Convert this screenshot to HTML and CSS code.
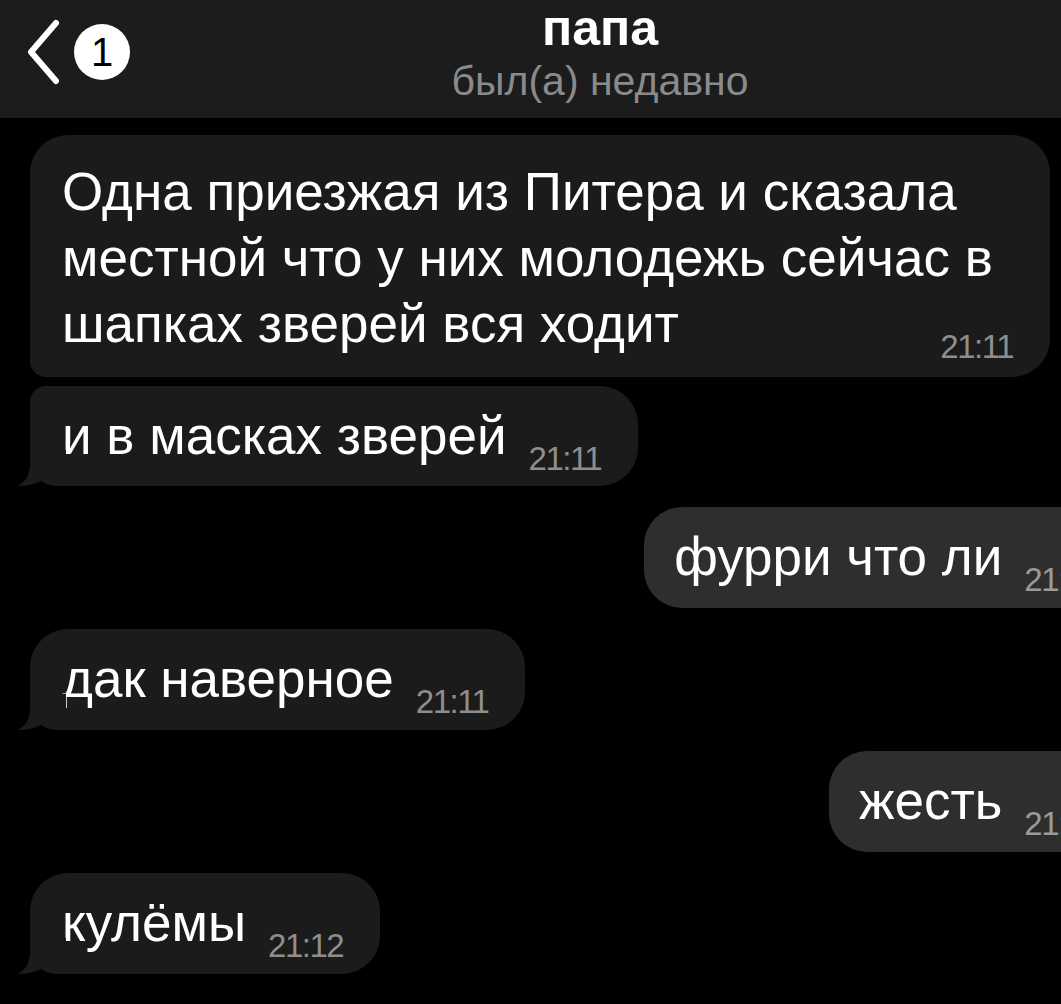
FILE: index.html
```html
<!DOCTYPE html>
<html lang="ru">

<head>
    <meta charset="UTF-8">
    <meta name="viewport" content="width=device-width, initial-scale=1.0">
    <title>папа</title>
    <link rel="stylesheet" href="styles.css">
</head>

<body>
    <div class="app">
        <div class="header">
            <div class="back">
                <svg class="chevron" width="36" height="66" viewBox="0 0 36 66">
                    <path d="M31 4 L6 33 L31 62" fill="none" stroke="#fff" stroke-width="6" stroke-linecap="round" stroke-linejoin="round"/>
                </svg>
                <span class="badge">1</span>
            </div>
            <div class="title">
                <div class="name">папа</div>
                <div class="status">был(а) недавно</div>
            </div>
            <div></div>
        </div>

        <div class="chat">
            <div class="row in">
                <div class="bubble group-top">Одна приезжая из Питера и сказала местной что у них молодежь сейчас в шапках зверей вся ходит<span class="time">21:11</span></div>
            </div>
            <div class="row in tight">
                <div class="bubble tail group-bottom">и в масках зверей<span class="time">21:11</span>
                    <svg class="tail-svg" width="48" height="36" viewBox="0 0 48 36"><path d="M12 0 V14 C12 25 7 32 0 36 C9 36 17 34 23 31 C27 34 33 36 44 36 L48 36 V0 Z" fill="#1b1b1b"/></svg>
                </div>
            </div>
            <div class="row out">
                <div class="bubble">фурри что ли<span class="time">21:11</span></div>
            </div>
            <div class="row in">
                <div class="bubble tail">дак наверное<span class="time">21:11</span>
                    <svg class="tail-svg" width="48" height="36" viewBox="0 0 48 36"><path d="M12 0 V14 C12 25 7 32 0 36 C9 36 17 34 23 31 C27 34 33 36 44 36 L48 36 V0 Z" fill="#1b1b1b"/></svg>
                </div>
            </div>
            <div class="row out">
                <div class="bubble">жесть<span class="time">21:11</span></div>
            </div>
            <div class="row in">
                <div class="bubble tail">кулёмы<span class="time">21:12</span>
                    <svg class="tail-svg" width="48" height="36" viewBox="0 0 48 36"><path d="M12 0 V14 C12 25 7 32 0 36 C9 36 17 34 23 31 C27 34 33 36 44 36 L48 36 V0 Z" fill="#1b1b1b"/></svg>
                </div>
            </div>
        </div>
    </div>
</body>

</html>
```

FILE: styles.css
```css
body {
    margin: 0;
    background-color: #000;
    overflow: hidden;
    font-family: 'Liberation Sans', Arial, sans-serif;
    color: #fff;
}
.app {
    width: 1200px;
}
.header {
    height: 118px;
    box-sizing: border-box;
    padding-top: 3px;
    background-color: #1c1c1c;
    display: grid;
    grid-template-columns: 1fr auto 1fr;
}
.back {
    display: flex;
    align-items: center;
    gap: 13px;
    padding-left: 25px;
    height: 98px;
}
.badge {
    width: 56px;
    height: 56px;
    border-radius: 50%;
    background-color: #fff;
    color: #000;
    font-size: 40px;
    line-height: 56px;
    text-align: center;
}
.title {
    text-align: center;
}
.name {
    font-size: 50px;
    font-weight: bold;
    line-height: 50px;
}
.status {
    font-size: 41px;
    line-height: 44px;
    margin-top: 6px;
    color: #8a8a8a;
}
.chat {
    display: flex;
    flex-direction: column;
    gap: 21px;
    padding-top: 17px;
}
.row {
    display: flex;
}
.row.in {
    justify-content: flex-start;
    padding-left: 30px;
}
.row.out {
    justify-content: flex-end;
    padding-right: 66px;
}
.row.tight {
    margin-top: -12px; /* grouped messages sit closer */
}
.bubble {
    position: relative;
    max-width: 951px;
    padding: 17px 37px 18px 32px;
    border-radius: 38px;
    background-color: #1b1b1b;
    font-size: 53px;
    line-height: 66px;
}
.row.out .bubble {
    background-color: #2e2e2e;
    padding-left: 30px;
}
.group-top {
    padding-top: 24px;
    padding-bottom: 20px;
    border-bottom-left-radius: 16px;
}
.group-bottom {
    padding-bottom: 17px;
    border-top-left-radius: 16px;
}
.time {
    float: right;
    margin: 41px 0 -41px 22px;
    font-size: 33px;
    line-height: 30px;
    letter-spacing: -1.5px;
    color: #8e8e8e;
}
.row.out .time {
    color: #9a9a9a;
}
.tail-svg {
    position: absolute;
    left: -12px;
    bottom: 0;
}
```
